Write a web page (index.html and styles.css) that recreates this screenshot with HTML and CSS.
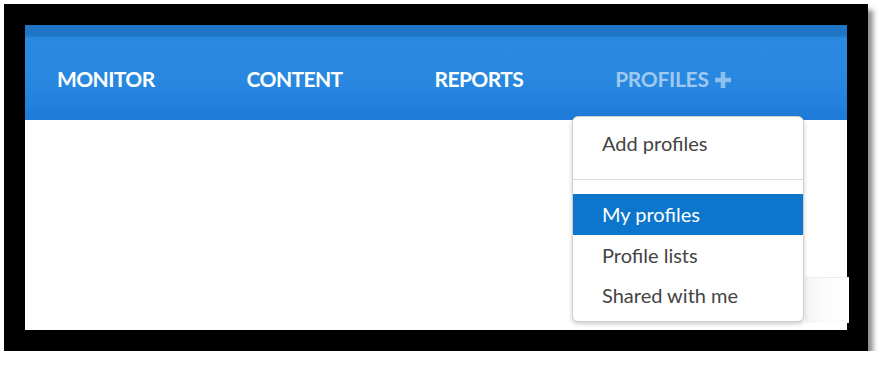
FILE: index.html
```html
<!DOCTYPE html>
<html>
<head>
<meta charset="UTF-8">
<title>Profiles menu</title>
<link rel="stylesheet" href="styles.css">
</head>
<body>
<div class="frame">
    <div class="screen">
        <div class="topbar">
            <ul class="nav">
                <li>MONITOR</li>
                <li>CONTENT</li>
                <li>REPORTS</li>
                <li class="dim">PROFILES
                    <svg class="plus" width="18" height="18" viewBox="0 0 18 18"><path d="M9 1v16M1 9h16" stroke="#8cc0ea" stroke-width="4.5"/></svg>
                </li>
            </ul>
        </div>
        <div class="ghost"></div>
        <div class="menu">
            <div class="item">Add profiles</div>
            <div class="sep"></div>
            <div class="item active">My profiles</div>
            <div class="item">Profile lists</div>
            <div class="item">Shared with me</div>
        </div>
    </div>
</div>
</body>
</html>
```

FILE: styles.css
```css
*{margin:0;padding:0;box-sizing:border-box;}
body
{
    background: #fff;
    font-family: Lato, "Liberation Sans", sans-serif;
}
.frame
{
    margin: 4px 0 0 4px;
    width: 864px;
    height: 347px;
    border: 21px solid #000;
    box-shadow: 5px 6px 5px rgba(0,0,0,0.45);
}
.screen
{
    position: relative;
    height: 100%;
    background: #fff;
}
.topbar
{
    height: 95px;
    background: linear-gradient(#1f74c4 0, #1f76c8 11px, #2a8ae0 13px, #2888e0 60%, #1f7ad8 100%);
    display: flex;
    align-items: center;
    padding-top: 11px;
}
.nav
{
    list-style: none;
    display: flex;
    gap: 92px;
    padding-left: 32px;
}
.nav li
{
    color: #fff;
    font-weight: 700;
    font-size: 21px;
    letter-spacing: -0.6px;
}
.nav .dim
{
    color: #9ec9f0;
    letter-spacing: -0.3px;
    display: flex;
    align-items: center;
    gap: 5px;
}
.plus
{
    margin-top: 4px;
}
.ghost
{
    position: absolute;
    left: 780px;
    top: 252px;
    width: 44px;
    height: 46px;
    background: linear-gradient(90deg, #f3f3f3, #fbfbfb 40%, #fff);
    border-top: 1px solid #ececec;
}
.menu
{
    position: absolute;
    left: 547px;
    top: 91px;
    width: 232px;
    height: 206px;
    background: #fff;
    border: 1px solid #cfcfcf;
    border-radius: 6px;
    box-shadow: 0 2px 4px rgba(0,0,0,0.2);
    padding-top: 6px;
}
.item
{
    height: 40px;
    line-height: 40px;
    padding-left: 29px;
    font-size: 20px;
    color: #444;
}
.sep
{
    height: 1px;
    background: #ddd;
    margin: 16px 0 14px;
}
.active
{
    height: 41px;
    line-height: 41px;
    background: #0c76cc;
    color: #fff;
}
```
